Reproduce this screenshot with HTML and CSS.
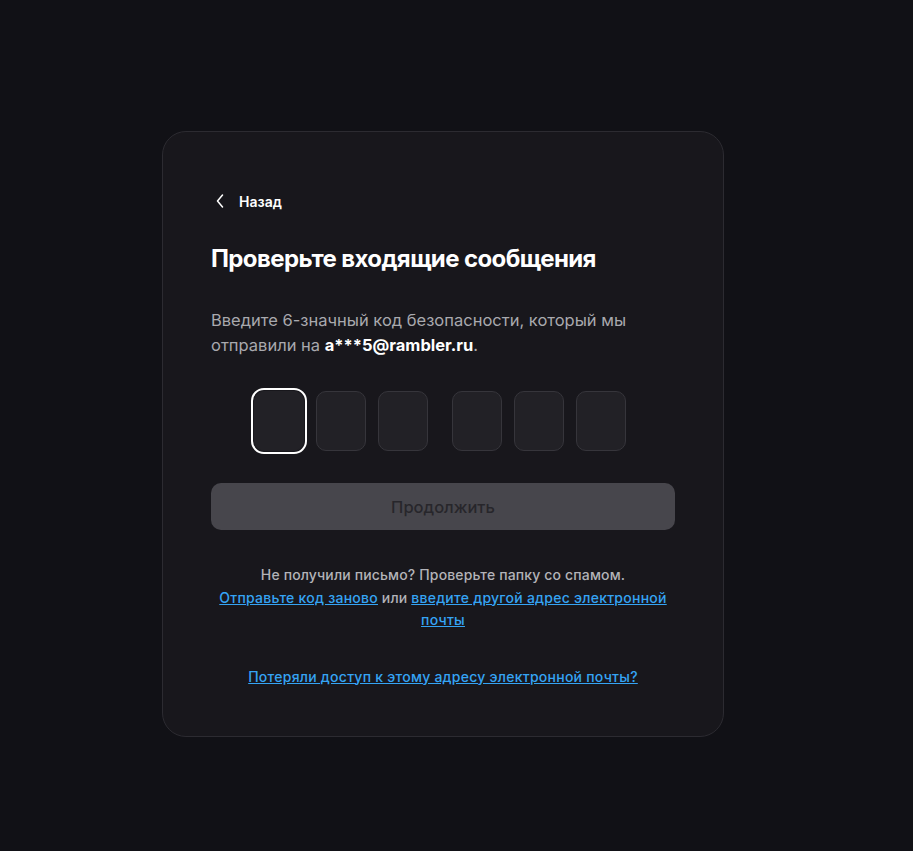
FILE: index.html
```html
<!DOCTYPE html>
<html lang="ru">
<head>
<meta charset="utf-8">
<title>Проверьте входящие сообщения</title>
<link rel="stylesheet" href="styles.css">
</head>
<body>
<main class="page">
  <section class="card">
    <a class="back" href="#">
      <svg class="chev" width="8" height="14" viewBox="0 0 8 14" fill="none"><path d="M6.5 1L1.5 7l5 6" stroke="#fff" stroke-width="1.5" stroke-linecap="round" stroke-linejoin="round"/></svg>
      <span>Назад</span>
    </a>
    <h1 class="title">Проверьте входящие сообщения</h1>
    <p class="desc">Введите 6-значный код безопасности, который мы отправили на <b>a***5@rambler.ru</b>.</p>
    <div class="otp">
      <div class="group">
        <div class="cell active"></div>
        <div class="cell"></div>
        <div class="cell"></div>
      </div>
      <div class="group">
        <div class="cell"></div>
        <div class="cell"></div>
        <div class="cell"></div>
      </div>
    </div>
    <button class="btn" type="button">Продолжить</button>
    <p class="help">Не получили письмо? Проверьте папку со спамом.<br><a href="#">Отправьте код заново</a> или <a href="#">введите другой адрес электронной почты</a></p>
    <p class="lost"><a href="#">Потеряли доступ к этому адресу электронной почты?</a></p>
  </section>
</main>
</body>
</html>
```
FILE: styles.css
```css
* { box-sizing: border-box; }
html, body { margin: 0; padding: 0; }
body {
  background: #111116;
  font-family: Inter, "Noto Sans", sans-serif;
  color: #fff;
  min-height: 851px;
}
.page {
  display: flex;
  justify-content: center;
  padding-top: 131px;
  padding-right: 27px;
}
.card {
  width: 562px;
  background: #18171c;
  border: 1px solid #2c2b31;
  border-radius: 24px;
  padding: 59px 48px 48px 48px;
  display: flex;
  flex-direction: column;
}
.back {
  display: flex;
  align-items: center;
  gap: 15px;
  color: #fff;
  text-decoration: none;
  font-size: 14px;
  font-weight: 600;
  padding-left: 5px;
  height: 20px;
}
.title {
  margin: 33px 0 0;
  font-size: 24px;
  font-weight: 700;
  letter-spacing: -0.6px;
  line-height: 30px;
}
.desc {
  margin: 34px 0 0;
  font-size: 16.5px;
  line-height: 25px;
  color: #a9a9ae;
}
.desc b { color: #fff; font-weight: 700; }
.otp {
  margin-top: 33px;
  display: flex;
  justify-content: center;
  gap: 24px;
  padding-right: 6px;
}
.group { display: flex; gap: 12px; }
.cell {
  width: 50px;
  height: 60px;
  border-radius: 10px;
  background: #222126;
  border: 1px solid #36353b;
}
.cell.active {
  border-color: #222126;
  outline: 2px solid #fff;
  outline-offset: 1px;
}
.btn {
  margin-top: 32px;
  height: 47px;
  border: none;
  border-radius: 10px;
  background: #47464c;
  color: #27262b;
  font-family: inherit;
  font-size: 16.5px;
  font-weight: 500;
}
.help {
  margin: 34px 0 0;
  text-align: center;
  font-size: 14px;
  line-height: 22.5px;
  font-weight: 500;
  letter-spacing: 0.15px;
  color: #b3b3b8;
}
.help a, .lost a { color: #35a4f4; letter-spacing: 0.25px; }
.lost {
  margin: 34px 0 0;
  text-align: center;
  font-size: 14px;
  line-height: 22px;
  font-weight: 500;
}
```
